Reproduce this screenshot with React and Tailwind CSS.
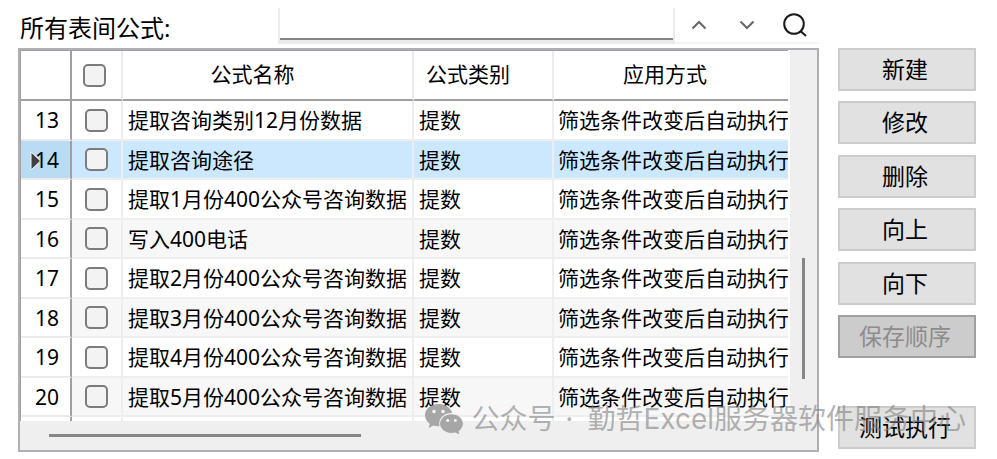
import React, { useState } from 'react';

const initialRows = [
    { id: 13, name: '提取咨询类别12月份数据', type: '提数', mode: '筛选条件改变后自动执行' },
    { id: 14, name: '提取咨询途径', type: '提数', mode: '筛选条件改变后自动执行' },
    { id: 15, name: '提取1月份400公众号咨询数据', type: '提数', mode: '筛选条件改变后自动执行' },
    { id: 16, name: '写入400电话', type: '提数', mode: '筛选条件改变后自动执行' },
    { id: 17, name: '提取2月份400公众号咨询数据', type: '提数', mode: '筛选条件改变后自动执行' },
    { id: 18, name: '提取3月份400公众号咨询数据', type: '提数', mode: '筛选条件改变后自动执行' },
    { id: 19, name: '提取4月份400公众号咨询数据', type: '提数', mode: '筛选条件改变后自动执行' },
    { id: 20, name: '提取5月份400公众号咨询数据', type: '提数', mode: '筛选条件改变后自动执行' },
];

const actions = ['新建', '修改', '删除', '向上', '向下'];

function CheckBox({ label, ...props }) {
    return (
        <input
            type="checkbox"
            aria-label={label}
            className="block size-[23px] appearance-none rounded-[5px] border-2 border-[#7c7c7c] bg-[#f3f3f3] checked:bg-[#0067c0]"
            {...props}
        />
    );
}

function SideButton({ children, ...props }) {
    return (
        <button
            type="button"
            className="h-[43px] w-full border-2 border-[#cccccc] bg-[#e1e1e1] pr-1 text-[23px] leading-none text-black disabled:border-[#a0a0a0] disabled:bg-[#cccccc] disabled:text-[#8c8c8c]"
            {...props}
        >
            {children}
        </button>
    );
}

function Toolbar() {
    return (
        <div className="flex h-[36px]">
            <label htmlFor="keyword" className="w-[260px] shrink-0 pl-0.5 pt-0.5 text-[24px] leading-[36px]">
                所有表间公式:
            </label>
            {/* 输入框只有下边框是深色 */}
            <div className="min-w-0 flex-1 border-x-2 border-b-4 border-[#ebebeb]">
                <input
                    id="keyword"
                    type="text"
                    className="block h-full w-full border-b-2 border-[#868686] bg-white px-2 text-[21px] outline-none"
                />
            </div>
            <div className="flex shrink-0 border-b-2 border-[#f3f3f3]">
                <button type="button" aria-label="上一个" className="flex w-12 items-center justify-center">
                    <svg width="16" height="10" viewBox="0 0 16 10" fill="none" stroke="#6a6a6a" strokeWidth="2.2">
                        <path d="M1.5 8.5 8 2l6.500 6.500" />
                    </svg>
                </button>
                <button type="button" aria-label="下一个" className="flex w-12 items-center justify-center">
                    <svg width="16" height="10" viewBox="0 0 16 10" fill="none" stroke="#6a6a6a" strokeWidth="2.2">
                        <path d="M1.500 1.500 8 8l6.500-6.500" />
                    </svg>
                </button>
                <button type="button" aria-label="查找" className="flex w-12 items-center justify-center">
                    <svg width="24" height="24" viewBox="0 0 24 24" fill="none" stroke="#1a1a1a" strokeWidth="2">
                        <circle cx="11" cy="11" r="9.800" />
                        <path d="m17.500 18 5.500 5" />
                    </svg>
                </button>
            </div>
        </div>
    );
}

function FormulaTable({ rows, current, onSelect, checked, onToggle, onToggleAll }) {
    return (
        <table className="w-full table-fixed border-separate border-spacing-0 text-[21px] leading-[26px]">
            <colgroup>
                <col className="w-[51px]" />
                <col className="w-[51px]" />
                <col className="w-[291px]" />
                <col className="w-[140px]" />
                <col />
            </colgroup>
            <thead>
                <tr className="h-[50px]">
                    <th className="border-b-2 border-r-2 border-[#a0a0a0] p-0" />
                    <th className="border-b-2 border-r-2 border-b-[#a0a0a0] border-r-[#ebebeb] p-0 pl-[11px]">
                        <CheckBox
                            label="全选"
                            checked={checked.length === rows.length}
                            onChange={onToggleAll}
                        />
                    </th>
                    <th className="border-b-2 border-r-2 border-b-[#a0a0a0] border-r-[#ebebeb] p-0 pb-0.5 pr-[30px] font-normal">公式名称</th>
                    <th className="border-b-2 border-r-2 border-b-[#a0a0a0] border-r-[#ebebeb] p-0 pb-0.5 pr-[30px] font-normal">公式类别</th>
                    <th className="border-b-2 border-[#a0a0a0] p-0 pb-0.5 pr-3 font-normal">应用方式</th>
                </tr>
            </thead>
            <tbody>
                {rows.map((row) => (
                    <tr
                        key={row.id}
                        onClick={() => onSelect(row.id)}
                        className={
                            row.id === current
                                ? 'h-[39px] bg-[#cce8ff]'
                                : 'odd:h-[40px] even:h-[39px] even:bg-[#f7f7f7]'
                        }
                    >
                        <th
                            className={
                                'relative border-b-2 border-r-2 border-b-[#ebebeb] border-r-[#a0a0a0] p-0 pl-[3px] text-center font-normal ' +
                                (row.id === current ? 'bg-[#b9dbf3]' : 'bg-white')
                            }
                        >
                            {row.id === current && (
                                <svg className="absolute left-[9px] top-[10px]" width="11" height="20" viewBox="0 0 11 20">
                                    <path d="M1 1v18l9.500-9z" fill="#404040" stroke="#f3f3f3" />
                                </svg>
                            )}
                            <span className="relative">{row.id}</span>
                        </th>
                        <td className="border-b-2 border-r-2 border-[#eeeeee] p-0 pl-[13px]">
                            <CheckBox
                                label={row.name}
                                checked={checked.includes(row.id)}
                                onChange={() => onToggle(row.id)}
                            />
                        </td>
                        <td className="overflow-hidden whitespace-nowrap border-b-2 border-r-2 border-[#eeeeee] p-0 pl-[5px]">{row.name}</td>
                        <td className="overflow-hidden whitespace-nowrap border-b-2 border-r-2 border-[#eeeeee] p-0 pl-[5px]">{row.type}</td>
                        <td className="overflow-hidden whitespace-nowrap border-b-2 border-[#eeeeee] p-0 pl-1">{row.mode}</td>
                    </tr>
                ))}
                <tr className="h-1">
                    <td className="border-r-2 border-[#a0a0a0] p-0" />
                    <td className="border-r-2 border-[#eeeeee] p-0" />
                    <td className="border-r-2 border-[#eeeeee] p-0" />
                    <td className="border-r-2 border-[#eeeeee] p-0" />
                    <td className="p-0" />
                </tr>
            </tbody>
        </table>
    );
}

function Watermark() {
    return (
        <div
            className="pointer-events-none absolute right-[31px] top-[400px] flex items-center whitespace-nowrap font-['Inter','Noto_Sans_CJK_SC',sans-serif] text-[28px] leading-[38px] text-[#808080]/60"
        >
            <svg className="mr-2" width="38" height="30" viewBox="0 0 38 30">
                <path
                    fill="#a6a6a6"
                    fillRule="evenodd"
                    d="M13.500 0C6 0 0 5 0 11.200c0 3.500 1.900 6.500 4.800 8.600L3.600 24l4.700-2.500c1.700.5 3.400.8 5.200.8h1.100a9 9 0 0 1-.4-2.600c0-6 5.500-10.700 12.200-10.700h.8C25.700 3.800 20 0 13.500 0ZM9 5.700a1.800 1.800 0 1 1 0 3.600 1.800 1.800 0 0 1 0-3.600Zm9 0a1.800 1.800 0 1 1 0 3.600 1.800 1.800 0 0 1 0-3.600Z"
                />
                <path
                    fill="#a6a6a6"
                    fillRule="evenodd"
                    d="M26.500 10.200c-6.300 0-11.400 4.200-11.400 9.400S20.200 29 26.500 29c1.300 0 2.600-.2 3.800-.5l4.200 1.900-1-3.200c2.700-1.700 4.400-4.400 4.400-7.600 0-5.200-5.100-9.400-11.400-9.400Zm-3.800 4.900a1.500 1.500 0 1 1 0 3 1.500 1.500 0 0 1 0-3Zm7.600 0a1.500 1.500 0 1 1 0 3 1.500 1.500 0 0 1 0-3Z"
                />
            </svg>
            <span>公众号</span>
            <span className="w-8 pr-1 text-center">·</span>
            <span>勤哲Excel服务器软件服务中心</span>
        </div>
    );
}

export default function App() {
    const [current, setCurrent] = useState(14);
    const [checked, setChecked] = useState([]);

    const toggle = (id) => {
        setChecked(checked.includes(id) ? checked.filter((c) => c !== id) : [...checked, id]);
    };

    const toggleAll = () => {
        setChecked(checked.length === initialRows.length ? [] : initialRows.map((row) => row.id));
    };

    return (
        <div className="relative flex gap-[19px] bg-white pb-2 pl-[18px] pr-[21px] pt-2 font-['Noto_Sans','Noto_Sans_CJK_SC',sans-serif] text-black">
            <main className="min-w-0 flex-1">
                <Toolbar />

                <div className="mt-1 border-2 border-[#b0b0b4]">
                    <div className="flex">
                        <div className="min-w-0 flex-1 overflow-hidden border-l border-t border-[#a0a0a0]">
                            <FormulaTable
                                rows={initialRows}
                                current={current}
                                onSelect={setCurrent}
                                checked={checked}
                                onToggle={toggle}
                                onToggleAll={toggleAll}
                            />
                        </div>
                        {/* 纵向滚动条 */}
                        <div className="ml-0.5 flex w-[27px] justify-center bg-[#efefef] pt-[208px]">
                            <div className="h-[121px] w-[3px] bg-[#868686]" />
                        </div>
                    </div>
                    {/* 横向滚动条 */}
                    <div className="flex h-[29px] items-center bg-[#efefef] pl-[29px]">
                        <div className="h-[3px] w-[312px] bg-[#868686]" />
                    </div>
                </div>
            </main>

            <aside className="w-[138px] shrink-0 pt-10">
                <div className="flex h-[310px] flex-col justify-between">
                    {actions.map((action) => (
                        <SideButton key={action}>{action}</SideButton>
                    ))}
                    <SideButton disabled>保存顺序</SideButton>
                </div>
                <div className="mt-12">
                    <SideButton>测试执行</SideButton>
                </div>
            </aside>

            <Watermark />
        </div>
    );
}
